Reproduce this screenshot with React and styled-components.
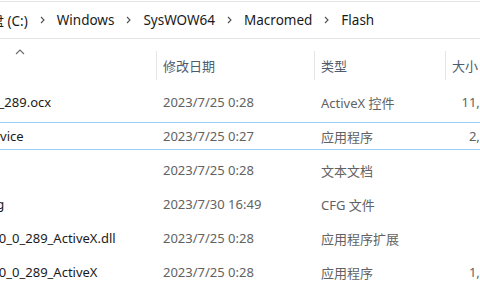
import React from "react";
import styled, { createGlobalStyle } from "styled-components";

const GlobalStyle = createGlobalStyle`
  body {
    margin: 0;
    background: #ffffff;
    font-family: "Noto Sans", "Noto Sans CJK SC", sans-serif;
    overflow: hidden;
  }
`

const Window = styled.div`
  width: 480px;
  height: 300px;
  overflow: hidden;
  background: #ffffff;
`

const AddressBar = styled.div`
  margin-top: 1px;
  height: 36px;
  border-top: 1px solid #e5e5e5;
  border-bottom: 1px solid #e5e5e5;
  display: flex;
  align-items: center;
  overflow: hidden;
`

const Crumbs = styled.div`
  display: flex;
  align-items: center;
  margin-left: -50px;
  white-space: nowrap;
`

const Crumb = styled.span`
  font-size: 13.5px;
  color: #1a1a1a;
`

const Sep = styled.span`
  display: flex;
  align-items: center;
  padding: 0 12px;
  color: #555;
`

const List = styled.div`
  margin-left: -116px;
  width: 700px;
`

const Columns = styled.div`
  display: grid;
  grid-template-columns: 272px 158px 131px 84px;
  align-items: center;
`

const HeaderRow = styled(Columns)`
  padding: 12px 0 5px;
`

const HeadCell = styled.div`
  position: relative;
  height: 29px;
  display: flex;
  align-items: center;
  padding-left: 6px;
  border-left: ${p => (p.$divider ? "1px solid #e5e5e5" : "none")};
  font-size: 13px;
  color: #4c5b70;
`

const SortArrow = styled.span`
  position: absolute;
  top: -2px;
  left: 131px;
  display: flex;
`

const Row = styled.div`
  height: 34px;
  padding: 3px 0;
  box-sizing: border-box;
`

const Item = styled(Columns)`
  height: 28px;
  box-sizing: border-box;
  border-top: 1px solid ${p => (p.$focused ? "#99cdf5" : "transparent")};
  border-bottom: 1px solid ${p => (p.$focused ? "#99cdf5" : "transparent")};
`

const Cell = styled.div`
  font-size: 13px;
  white-space: nowrap;
  overflow: hidden;
  padding-left: ${p => (p.$name ? "21px" : "7px")};
  color: ${p => (p.$name ? "#1b1b1b" : "#626262")};
  text-align: ${p => (p.$right ? "right" : "left")};
  padding-right: ${p => (p.$right ? "7px" : "0")};
`

const Chevron = () => (
  <svg width="5" height="8" viewBox="0 0 5 8">
    <path d="M1 1 L4 4 L1 7" fill="none" stroke="#505050" strokeWidth="1.1" />
  </svg>
)

const crumbs = ["本地磁盘 (C:)", "Windows", "SysWOW64", "Macromed", "Flash"]

const files = [
  { name: "Flash32_32_0_0_289.ocx", date: "2023/7/25 0:28", type: "ActiveX 控件", size: "11,652 KB" },
  { name: "FlashPlayer_Service", date: "2023/7/25 0:27", type: "应用程序", size: "2,136 KB", focused: true },
  { name: "install", date: "2023/7/25 0:28", type: "文本文档", size: "1 KB" },
  { name: "FlashPlayer9.cfg", date: "2023/7/30 16:49", type: "CFG 文件", size: "1 KB" },
  { name: "FlashUtil32_32_0_0_289_ActiveX.dll", date: "2023/7/25 0:28", type: "应用程序扩展", size: "706 KB" },
  { name: "FlashUtil32_32_0_0_289_ActiveX", date: "2023/7/25 0:28", type: "应用程序", size: "1,464 KB" },
]

export default function App() {
  return (
    <Window>
      <GlobalStyle />
      <AddressBar>
        <Crumbs>
          {crumbs.map((c, i) => (
            <React.Fragment key={c}>
              {i > 0 && (
                <Sep>
                  <Chevron />
                </Sep>
              )}
              <Crumb>{c}</Crumb>
            </React.Fragment>
          ))}
        </Crumbs>
      </AddressBar>
      <List>
        <HeaderRow>
          <HeadCell>
            名称
            <SortArrow>
              <svg width="10" height="6" viewBox="0 0 10 6">
                <path d="M1 5 L5 1 L9 5" fill="none" stroke="#6b6b6b" strokeWidth="1.1" />
              </svg>
            </SortArrow>
          </HeadCell>
          <HeadCell $divider>修改日期</HeadCell>
          <HeadCell $divider>类型</HeadCell>
          <HeadCell $divider>大小</HeadCell>
        </HeaderRow>
        {files.map(f => (
          <Row key={f.name}>
            <Item $focused={f.focused}>
              <Cell $name>{f.name}</Cell>
              <Cell>{f.date}</Cell>
              <Cell>{f.type}</Cell>
              <Cell $right>{f.size}</Cell>
            </Item>
          </Row>
        ))}
      </List>
    </Window>
  )
}
